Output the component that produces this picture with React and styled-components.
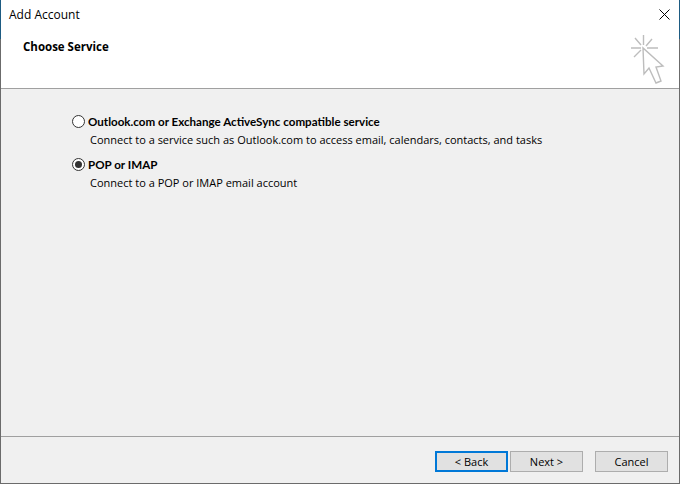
import React from 'react';
import styled, { createGlobalStyle } from 'styled-components';

const Global = createGlobalStyle`
  html, body { margin: 0; padding: 0; background: #fff; }
  body { width: 680px; height: 485px; overflow: hidden; font-family: "Open Sans", "Noto Sans", sans-serif; }
`;

const Dialog = styled.div`
  box-sizing: border-box;
  width: 680px;
  height: 484px;
  border-style: solid;
  border-width: 0 1px 1px;
  border-image: linear-gradient(#1d5b82 40px, #6b6b6b 40px) 1;
  display: flex;
  flex-direction: column;
  background: #f0f0f0;
  color: #000;
`;

const Header = styled.header`
  box-sizing: border-box;
  height: 89px;
  flex: none;
  background: #fff;
  border-bottom: 1px solid #a0a0a0;
  display: flex;
  flex-direction: column;
`;

const TitleBar = styled.div`
  height: 30px;
  padding-left: 8px;
  display: flex;
  align-items: flex-start;
  justify-content: space-between;
  font-size: 12px;
  line-height: 30px;
`;

const CloseButton = styled.button`
  width: 30px;
  height: 28px;
  padding: 0;
  border: 0;
  background: none;
  display: flex;
  align-items: center;
  justify-content: center;
`;

const Banner = styled.div`
  flex: 1;
  padding: 5px 14px 0 22px;
  display: flex;
  justify-content: space-between;
`;

const Heading = styled.h1`
  margin: 4px 0 0;
  font-size: 11.5px;
  line-height: 16px;
  font-weight: 700;
`;

const Body = styled.main`
  flex: 1;
  padding: 25px 0 0 71px;
  display: flex;
  flex-direction: column;
  gap: 9px;
`;

const Option = styled.label`
  display: grid;
  grid-template-columns: 16px 1fr;
  row-gap: 2px;
`;

const Radio = styled.span`
  box-sizing: border-box;
  width: 13px;
  height: 13px;
  margin-top: 1px;
  border: 1px solid #333;
  border-radius: 50%;
  background: #fff;
  display: flex;
  align-items: center;
  justify-content: center;
  &::after {
    content: '';
    width: 7px;
    height: 7px;
    border-radius: 50%;
    background: ${p => (p.$checked ? '#333' : 'transparent')};
  }
`;

const OptionTitle = styled.span`
  font-family: "Lato", "Open Sans", sans-serif;
  font-size: 11.6px;
  line-height: 16px;
  font-weight: 700;
`;

const OptionText = styled.span`
  grid-column: 2;
  padding-left: 2px;
  font-size: 11px;
  line-height: 16px;
`;

const Footer = styled.footer`
  box-sizing: border-box;
  height: 47px;
  flex: none;
  border-top: 1px solid #a0a0a0;
  padding: 14px 11px 0 0;
  display: flex;
  justify-content: flex-end;
`;

const Button = styled.button`
  box-sizing: border-box;
  width: 73px;
  height: 21px;
  margin-left: ${p => p.$gap || 0}px;
  padding: 0;
  background: #e1e1e1;
  border: ${p => (p.$primary ? '2px solid #0078d7' : '1px solid #adadad')};
  font-family: inherit;
  font-size: 11px;
  color: #000;
`;

const CursorIcon = () => (
  <svg width="35" height="51" viewBox="0 0 35 51" fill="none" stroke="#bdbdbd" strokeWidth="1.4">
    <path d="M1 13h10M17 13h11M13.5 0v10M5 3l6 7M22 4l-6 7M4 22l7-7" />
    <path d="M13 13l1 26 5-6 7 15 5-2-5-14 7-1z" />
  </svg>
);

export default function App() {
  return (
    <>
      <Global />
      <Dialog>
        <Header>
          <TitleBar>
            Add Account
            <CloseButton aria-label="Close">
              <svg width="11" height="11" viewBox="0 0 11 11" stroke="#000" strokeWidth="1">
                <path d="M.5.5l10 10M10.5.5l-10 10" />
              </svg>
            </CloseButton>
          </TitleBar>
          <Banner>
            <Heading>Choose Service</Heading>
            <CursorIcon />
          </Banner>
        </Header>
        <Body>
          <Option>
            <Radio />
            <OptionTitle>Outlook.com or Exchange ActiveSync compatible service</OptionTitle>
            <OptionText>Connect to a service such as Outlook.com to access email, calendars, contacts, and tasks</OptionText>
          </Option>
          <Option>
            <Radio $checked />
            <OptionTitle>POP or IMAP</OptionTitle>
            <OptionText>Connect to a POP or IMAP email account</OptionText>
          </Option>
        </Body>
        <Footer>
          <Button $primary>&lt; Back</Button>
          <Button $gap={2}>Next &gt;</Button>
          <Button $gap={12}>Cancel</Button>
        </Footer>
      </Dialog>
    </>
  );
}
